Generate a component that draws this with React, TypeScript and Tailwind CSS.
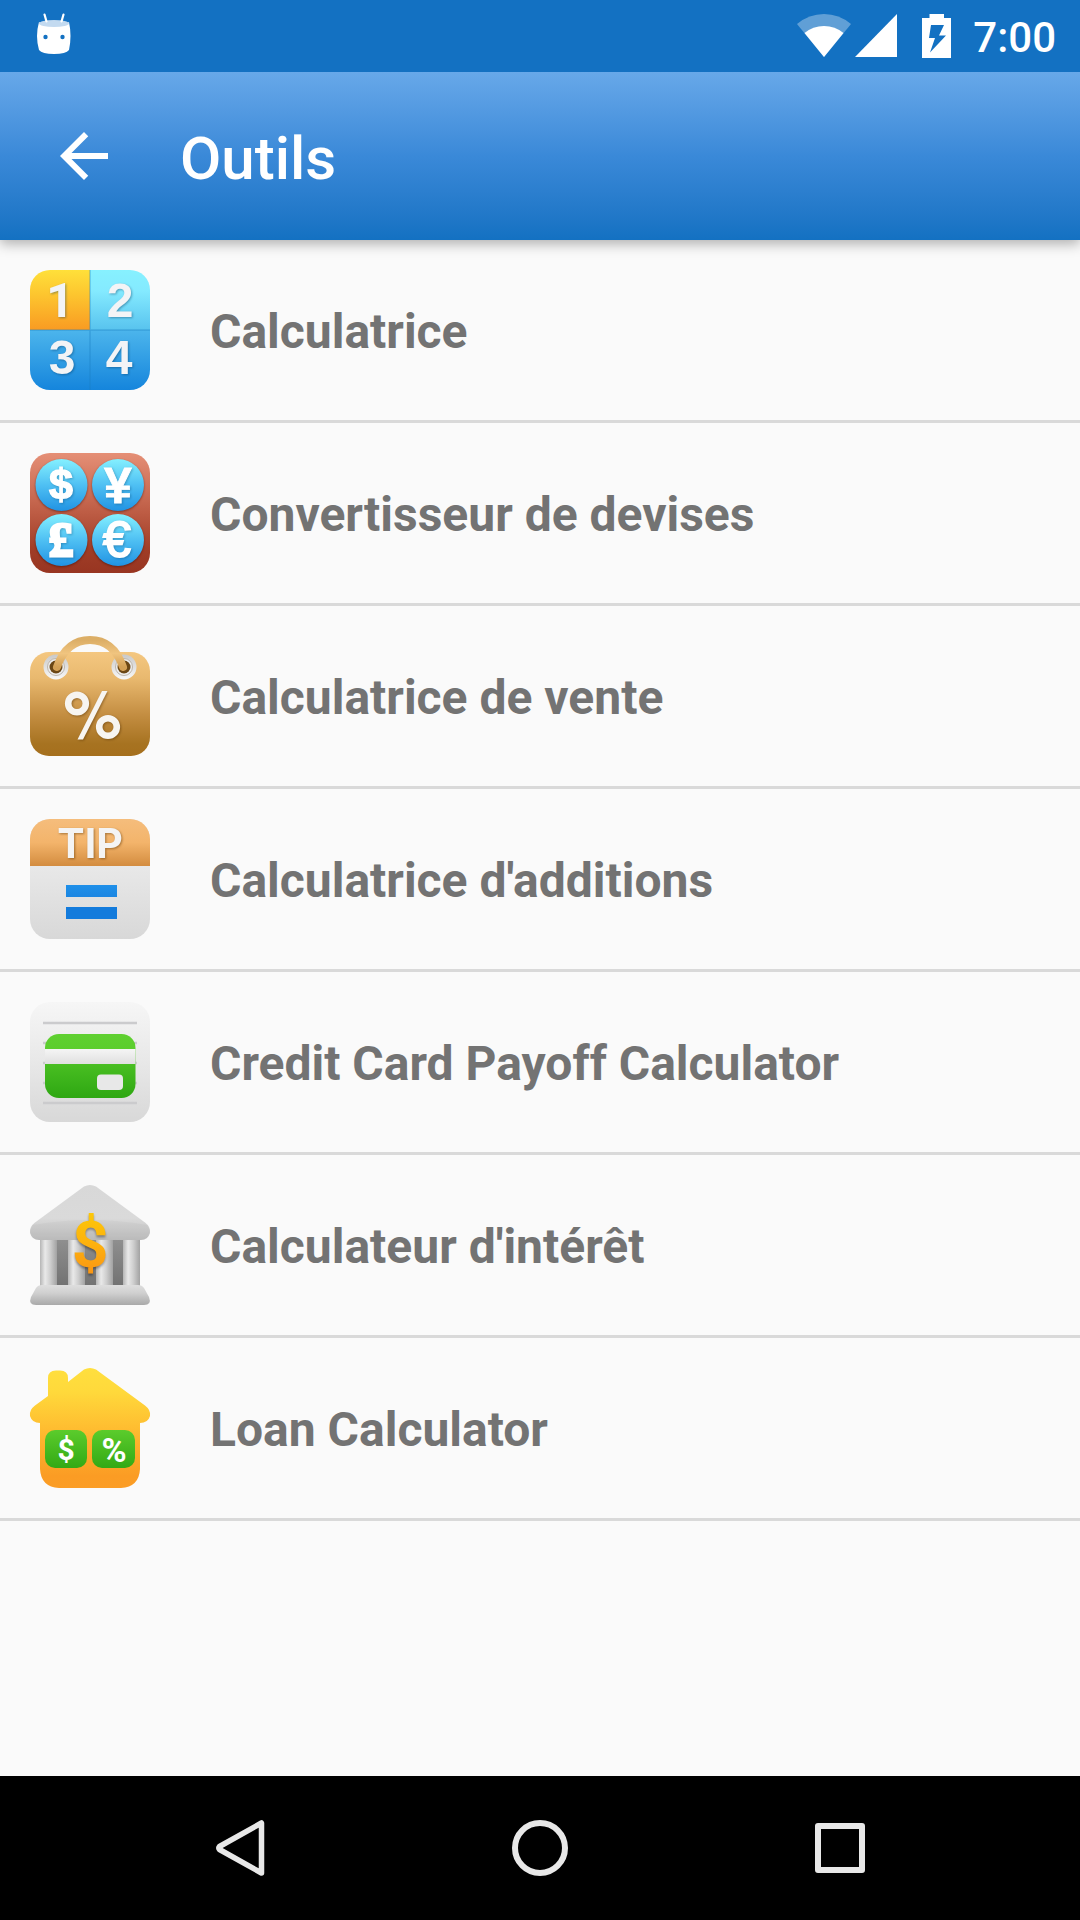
import type { ReactNode } from "react";

const SANS = "Liberation Sans, Arial, sans-serif";
const ROBOTO = "Roboto, sans-serif";

function Gradient({ id, stops }: { id: string; stops: [number, string][] }) {
  return (
    <linearGradient id={id} x1="0" y1="0" x2="0" y2="1">
      {stops.map(([offset, color]) => (
        <stop key={offset} offset={offset} stopColor={color} />
      ))}
    </linearGradient>
  );
}

function ToolIcon({ children }: { children: ReactNode }) {
  return (
    <svg viewBox="0 0 120 120" className="size-[120px] shrink-0 overflow-visible" aria-hidden="true">
      {children}
    </svg>
  );
}

function CalculatorIcon() {
  return (
    <ToolIcon>
      <defs>
        <Gradient id="calc-yellow" stops={[[0, "#ffe03a"], [0.4, "#fdc62f"], [1, "#f99b22"]]} />
        <Gradient id="calc-cyan" stops={[[0, "#87f1ff"], [0.35, "#84eaff"], [1, "#58c3ee"]]} />
        <Gradient id="calc-blue" stops={[[0, "#4cb5ec"], [1, "#1585dc"]]} />
        <clipPath id="calc-clip">
          <rect width="120" height="120" rx="20" />
        </clipPath>
      </defs>
      <g clipPath="url(#calc-clip)">
        <rect width="60" height="60" fill="url(#calc-yellow)" />
        <rect x="60" width="60" height="60" fill="url(#calc-cyan)" />
        <rect y="60" width="120" height="60" fill="url(#calc-blue)" />
        <path d="M60 0V120M0 60H120" stroke="#1b7fc4" strokeOpacity="0.4" strokeWidth="1.4" />
      </g>
      <g
        fontFamily={SANS}
        fontWeight="700"
        fontSize="48"
        textAnchor="middle"
        fill="#f3f4f6"
        className="drop-shadow-[1px_1px_1px_rgba(0,50,90,0.4)]"
      >
        <text x="30" y="47" fontFamily={ROBOTO}>1</text>
        <text x="90" y="47">2</text>
        <text x="32" y="104">3</text>
        <text x="89" y="104">4</text>
      </g>
    </ToolIcon>
  );
}

function CurrencyIcon() {
  return (
    <ToolIcon>
      <defs>
        <Gradient id="cur-bg" stops={[[0, "#e58f76"], [0.5, "#bd5c44"], [0.8, "#a03d27"], [1, "#983521"]]} />
        <Gradient id="cur-coin" stops={[[0, "#84f0ff"], [0.5, "#4fc0f3"], [1, "#2193e3"]]} />
      </defs>
      <rect width="120" height="120" rx="20" fill="url(#cur-bg)" />
      <g fill="url(#cur-coin)" className="drop-shadow-[0_1px_1px_rgba(60,10,0,0.5)]">
        <circle cx="31.5" cy="32" r="26" />
        <circle cx="88" cy="32" r="26" />
        <circle cx="31.5" cy="87" r="26" />
        <circle cx="88" cy="87" r="26" />
      </g>
      <g
        fontFamily={SANS}
        fontWeight="700"
        textAnchor="middle"
        fill="#fff"
        stroke="#fff"
        className="drop-shadow-[1px_1px_1px_rgba(0,50,90,0.3)]"
      >
        <text x="31" y="46" fontSize="43" strokeWidth="1.4">$</text>
        <text x="88" y="50" fontSize="50" strokeWidth="0.8">¥</text>
        <text x="31" y="103" fontSize="49" strokeWidth="3" fontFamily="Liberation Serif, serif">£</text>
        <text x="87" y="104" fontSize="50" strokeWidth="2" fontWeight="400">€</text>
      </g>
    </ToolIcon>
  );
}

function SaleIcon() {
  return (
    <ToolIcon>
      <defs>
        <Gradient id="sale-bag" stops={[[0, "#f4c780"], [0.25, "#e9b96f"], [0.6, "#c48e42"], [0.88, "#a77321"], [1, "#a56f1d"]]} />
        <Gradient id="sale-handle" stops={[[0, "#dcae66"], [0.5, "#f0c47f"], [1, "#d3a055"]]} />
        <Gradient id="sale-ring" stops={[[0, "#c9c9c9"], [1, "#f8f8f8"]]} />
      </defs>
      <rect y="16" width="120" height="104" rx="19" fill="url(#sale-bag)" />
      {[26, 94].map((cx) => (
        <g key={cx}>
          <circle cx={cx} cy="31" r="12.5" fill="url(#sale-ring)" />
          <circle cx={cx} cy="31" r="8.5" fill="#efefef" stroke="#bdb5ab" strokeWidth="1" />
          <circle cx={cx} cy="31" r="6.5" fill="#6b4715" />
        </g>
      ))}
      <path
        d="M27 31C33 14 44 4 60 4S87 14 93 31"
        fill="none"
        stroke="url(#sale-handle)"
        strokeWidth="8"
        strokeLinecap="round"
      />
      <g className="drop-shadow-[1px_1px_1px_rgba(80,45,0,0.45)]">
        <circle cx="47" cy="67.5" r="8.8" fill="none" stroke="#f7f5f1" strokeWidth="6.6" />
        <circle cx="78" cy="91" r="8.8" fill="none" stroke="#f7f5f1" strokeWidth="6.6" />
        <path d="M47.5 103.5H53L77.5 55H72Z" fill="#f7f5f1" />
      </g>
    </ToolIcon>
  );
}

function TipIcon() {
  return (
    <ToolIcon>
      <defs>
        <Gradient id="tip-bg" stops={[[0, "#e9e9e9"], [0.4, "#e8e8e8"], [1, "#d8d8d8"]]} />
        <Gradient id="tip-top" stops={[[0, "#f5bd7c"], [0.5, "#f3b46b"], [1, "#d38c3f"]]} />
        <Gradient id="tip-bar" stops={[[0, "#1f90e9"], [1, "#1b86e2"]]} />
        <clipPath id="tip-clip">
          <rect width="120" height="120" rx="20" />
        </clipPath>
      </defs>
      <g clipPath="url(#tip-clip)">
        <rect width="120" height="120" fill="url(#tip-bg)" />
        <rect width="120" height="47" fill="url(#tip-top)" />
      </g>
      <text
        x="60"
        y="39"
        fontFamily="Inter, sans-serif"
        fontWeight="700"
        fontSize="41"
        textAnchor="middle"
        fill="#f4f4f4"
        className="drop-shadow-[1px_1px_1px_rgba(90,50,0,0.5)]"
      >
        TIP
      </text>
      <rect x="36" y="66" width="51" height="12" fill="url(#tip-bar)" />
      <rect x="36" y="88" width="51" height="12" fill="#137bdc" />
    </ToolIcon>
  );
}

function CreditCardIcon() {
  return (
    <ToolIcon>
      <defs>
        <Gradient id="card-bg" stops={[[0, "#f6f6f6"], [0.5, "#e8e8e8"], [1, "#d8d8d8"]]} />
        <Gradient id="card-green" stops={[[0, "#5fd030"], [0.25, "#5bcd2d"], [0.5, "#47bd21"], [1, "#2ea712"]]} />
        <Gradient id="card-stripe" stops={[[0, "#f5f5f5"], [1, "#e0e0e0"]]} />
      </defs>
      <rect width="120" height="120" rx="20" fill="url(#card-bg)" />
      <path d="M13 21H107M13 41H107M13 61H107M13 81H107M13 101H107" stroke="#cbcbcd" strokeWidth="2.4" />
      <rect x="15" y="32" width="90.5" height="64" rx="14" fill="url(#card-green)" />
      <rect x="15" y="47" width="90.5" height="15" fill="url(#card-stripe)" />
      <rect x="67" y="72.5" width="26" height="15.5" rx="4" fill="#e8e8e8" />
    </ToolIcon>
  );
}

function BankIcon() {
  return (
    <ToolIcon>
      <defs>
        <Gradient id="bank-roof" stops={[[0, "#d8d8d8"], [0.6, "#dadada"], [1, "#bebebe"]]} />
        <Gradient id="bank-base" stops={[[0, "#dedede"], [0.4, "#d0d0d0"], [1, "#a9a9a9"]]} />
        <Gradient id="bank-dollar" stops={[[0, "#fccb08"], [0.5, "#fdb00e"], [1, "#f88d16"]]} />
        <linearGradient id="bank-column">
          <stop offset="0" stopColor="#b5b5b5" />
          <stop offset="0.3" stopColor="#e9e9e9" />
          <stop offset="0.6" stopColor="#cfcfcf" />
          <stop offset="1" stopColor="#a2a2a2" />
        </linearGradient>
        <Gradient id="bank-gap" stops={[[0, "#909090"], [1, "#727272"]]} />
      </defs>
      <rect x="10" y="53" width="100" height="48" fill="url(#bank-gap)" />
      {[10, 38, 66, 93].map((x) => (
        <rect key={x} x={x} y="53" width="17" height="48" fill="url(#bank-column)" />
      ))}
      <path
        d="M54 1.5Q60 -1.5 66 1.5L115 37.5Q121 42 120 48Q118 55 111 55H9Q2 55 0 48Q-1 42 5 37.5Z"
        fill="url(#bank-roof)"
      />
      <path d="M3 40Q60 30 117 40Q121 47 118 51Q116 55 111 55H9Q4 55 2 51Q-1 47 3 40Z" fill="#9a9a9a" fillOpacity="0.1" />
      <path d="M12 100H108Q112 100 114 103L119 112Q122 120 114 120H6Q-2 120 1 112L6 103Q8 100 12 100Z" fill="url(#bank-base)" />
      <text
        x="60"
        y="82"
        fontFamily={ROBOTO}
        fontWeight="700"
        fontSize="64"
        textAnchor="middle"
        fill="url(#bank-dollar)"
        className="drop-shadow-[0_2px_1px_rgba(0,0,0,0.35)]"
      >
        $
      </text>
    </ToolIcon>
  );
}

function LoanIcon() {
  return (
    <ToolIcon>
      <defs>
        <Gradient id="loan-house" stops={[[0, "#ffdf3e"], [0.2, "#ffd93b"], [0.6, "#feb42d"], [0.9, "#fb9c24"], [1, "#fb9d25"]]} />
        <Gradient id="loan-green" stops={[[0, "#5bcc2c"], [1, "#33a915"]]} />
      </defs>
      <path
        d="M54 1.5Q60 -1.5 66 1.5L115 37.5Q121 42 120 48Q118 55 110 55V101Q109 119 91 120H29Q11 119 10 101V55Q2 55 0 48Q-1 42 5 37.5L18 28V10Q18 2.5 26 2.5H30Q38 2.5 38 10V14Z"
        fill="url(#loan-house)"
      />
      <rect x="15" y="62" width="42" height="38" rx="10" fill="url(#loan-green)" />
      <rect x="62" y="62" width="43" height="38" rx="10" fill="url(#loan-green)" />
      <g fontFamily={ROBOTO} fontWeight="700" textAnchor="middle" fill="#fff">
        <text x="36" y="92" fontSize="30">$</text>
        <text x="84" y="94" fontSize="34">%</text>
      </g>
    </ToolIcon>
  );
}

const TOOLS = [
  { label: "Calculatrice", Icon: CalculatorIcon },
  { label: "Convertisseur de devises", Icon: CurrencyIcon },
  { label: "Calculatrice de vente", Icon: SaleIcon },
  { label: "Calculatrice d'additions", Icon: TipIcon },
  { label: "Credit Card Payoff Calculator", Icon: CreditCardIcon },
  { label: "Calculateur d'intérêt", Icon: BankIcon },
  { label: "Loan Calculator", Icon: LoanIcon },
];

function StatusBar() {
  return (
    <div className="relative z-10 flex h-[72px] items-center justify-between bg-[#1371c2] pr-6 pl-9 text-white">
      <svg viewBox="0 0 36 42" className="mb-1 h-[42px] w-9" aria-hidden="true">
        <path d="M3 9C8 13 28 13 33 9Q36 23 33 37Q30 41 18 41Q6 41 3 37Q-1 23 3 9Z" fill="#fff" />
        <ellipse cx="18" cy="10.5" rx="15" ry="3.5" fill="#c3daf0" />
        <path d="M8.5 1.5L10.5 8.5M27.5 1.5L25.5 8.5" stroke="#fff" strokeWidth="2.2" strokeLinecap="round" />
        <circle cx="9.5" cy="24" r="2.2" fill="#1371c2" />
        <circle cx="26.5" cy="24" r="2.2" fill="#1371c2" />
      </svg>
      <div className="flex items-center">
        <svg viewBox="0 0 54 44" className="h-11 w-[54px]" aria-hidden="true">
          <path d="M0 10Q12 0 27 0T54 10L27 43Z" fill="#fff" fillOpacity="0.33" />
          <path d="M7.5 19Q16 12 27 12T46.5 19L27 43Z" fill="#fff" />
        </svg>
        <svg viewBox="0 0 42 44" className="ml-1 h-11 w-[42px]" aria-hidden="true">
          <path d="M42 0V43H0Z" fill="#fff" />
        </svg>
        <svg viewBox="0 0 29 44" className="ml-[25px] h-11 w-[29px]" aria-hidden="true">
          <path
            fillRule="evenodd"
            d="M7.5 0H22V4H29V44H0V4H7.5ZM9 11L7 24H13L8 38.5L24 21.5H17L22 11Z"
            fill="#fff"
          />
        </svg>
        <span className="ml-[22px] pt-1 text-[42px] leading-[48px] font-medium">7:00</span>
      </div>
    </div>
  );
}

function AppBar() {
  return (
    <header className="flex h-[168px] items-center bg-linear-to-b from-[#67a8e9] via-[#3a89d8] to-[#1371c2] pl-12 text-white shadow-[0_4px_12px_rgba(0,0,0,0.3)]">
      <button type="button" aria-label="Retour" className="shrink-0">
        <svg viewBox="0 0 24 24" className="size-[72px]" fill="currentColor" aria-hidden="true">
          <path d="M20 11H7.83l5.59-5.59L12 4l-8 8 8 8 1.41-1.41L7.83 13H20z" />
        </svg>
      </button>
      <h1 className="ml-[60px] pt-1.5 text-[60px] leading-[72px] font-medium">Outils</h1>
    </header>
  );
}

function NavBar() {
  return (
    <nav className="flex h-36 bg-black px-[90px] text-[#e8e8e8]">
      <button type="button" aria-label="Précédent" className="flex flex-1 items-center justify-center">
        <svg viewBox="0 0 60 60" className="size-[60px]" fill="none" stroke="currentColor" strokeWidth="5.5" strokeLinejoin="round">
          <path d="M51.5 5V55L9.5 31.5Q8 30 9.5 28.5Z" />
        </svg>
      </button>
      <button type="button" aria-label="Accueil" className="flex flex-1 items-center justify-center">
        <svg viewBox="0 0 60 60" className="size-[60px]" fill="none" stroke="currentColor" strokeWidth="6">
          <circle cx="30" cy="30" r="25" />
        </svg>
      </button>
      <button type="button" aria-label="Applications récentes" className="flex flex-1 items-center justify-center">
        <svg viewBox="0 0 60 60" className="size-[60px]" fill="none" stroke="currentColor" strokeWidth="6" strokeLinejoin="round">
          <rect x="8" y="8" width="44" height="44" />
        </svg>
      </button>
    </nav>
  );
}

export default function App() {
  return (
    <div className="flex min-h-screen flex-col bg-[#fafafa] font-[Roboto,sans-serif]">
      <StatusBar />
      <AppBar />
      <main className="flex-1">
        <ul>
          {TOOLS.map(({ label, Icon }) => (
            <li key={label} className="border-b-3 border-[#d9d9d9]">
              <button type="button" className="flex w-full items-center gap-[60px] p-[30px] text-left">
                <Icon />
                <span className="pt-1 text-5xl font-bold text-[#737373]">{label}</span>
              </button>
            </li>
          ))}
        </ul>
      </main>
      <NavBar />
    </div>
  );
}
